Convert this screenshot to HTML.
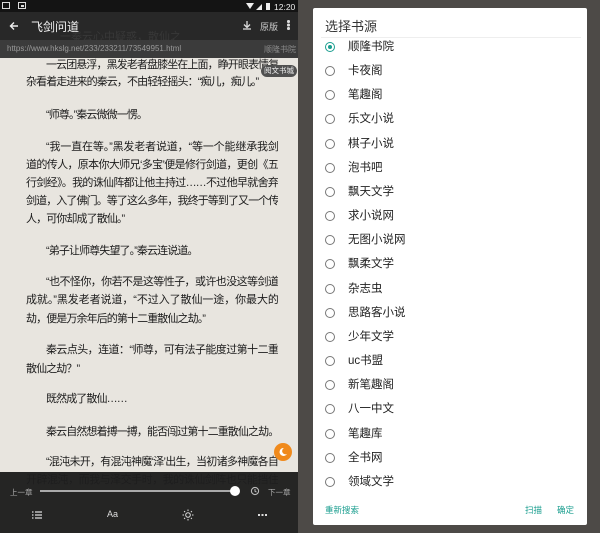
<!DOCTYPE html>
<html><head><meta charset="utf-8">
<style>
*{margin:0;padding:0;box-sizing:border-box}
body{width:600px;height:533px;overflow:hidden;position:relative;background:#4d4a47;font-family:"Liberation Sans","Noto Sans CJK SC",sans-serif}
#left{position:absolute;left:0;top:0;width:298px;height:533px;background:#e8e5df;overflow:hidden}
.ln{position:absolute;left:26px;width:252px;font-size:11px;letter-spacing:-0.9px;color:#1c1c1c;white-space:nowrap;line-height:14px;text-align:justify;text-align-last:justify;overflow:hidden}
.ln.e{text-align-last:left}
.ln.i{left:46px;width:232px}
.abs{position:absolute}
#dlg{position:absolute;left:313px;top:8px;width:274px;height:517px;background:#fff;border-radius:2px}
.r{position:absolute;left:12px;width:250px;height:20px;font-size:11.5px;color:#222;line-height:20px}
.r i{position:absolute;left:0;top:5px;width:10px;height:10px;border:1.3px solid #777;border-radius:50%}
.r span{position:absolute;left:23px}
</style></head><body>
<div id="left">
<div class="ln e i" style="top:58px">一云团悬浮，黑发老者盘膝坐在上面，睁开眼表情复</div>
<div class="ln e" style="top:75px">杂看着走进来的秦云，不由轻轻摇头：“痴儿，痴儿。”</div>
<div class="ln e i" style="top:108px">“师尊。”秦云微微一愣。</div>
<div class="ln i" style="top:140px">“我一直在等。”黑发老者说道，“等一个能继承我剑</div>
<div class="ln" style="top:158px">道的传人，原本你大师兄‘多宝’便是修行剑道，更创《五</div>
<div class="ln" style="top:176px">行剑经》。我的诛仙阵都让他主持过……不过他早就舍弃</div>
<div class="ln" style="top:194px">剑道，入了佛门。等了这么多年，我终于等到了又一个传</div>
<div class="ln e" style="top:212px">人，可你却成了散仙。”</div>
<div class="ln e i" style="top:244px">“弟子让师尊失望了。”秦云连说道。</div>
<div class="ln i" style="top:275px">“也不怪你，你若不是这等性子，或许也没这等剑道</div>
<div class="ln" style="top:293px">成就。”黑发老者说道，“不过入了散仙一途，你最大的</div>
<div class="ln e" style="top:312px">劫，便是万余年后的第十二重散仙之劫。”</div>
<div class="ln i" style="top:343px">秦云点头，连道：“师尊，可有法子能度过第十二重</div>
<div class="ln e" style="top:362px">散仙之劫？”</div>
<div class="ln e i" style="top:392px">既然成了散仙……</div>
<div class="ln e i" style="top:425px">秦云自然想着搏一搏，能否闯过第十二重散仙之劫。</div>
<div class="ln i" style="top:455px">“混沌未开，有混沌神魔‘泽’出生，当初诸多神魔各自</div>
<div class="ln" style="top:473px">开辟混沌，而我与泽交手时，我的诛仙剑阵也只能挡住</div>

<div class="abs" style="left:0;top:0;width:298px;height:12px;background:#141414"></div>
<div class="abs" style="left:2px;top:2px;width:8px;height:7px;border:1.3px solid #ddd"></div>
<div class="abs" style="left:18px;top:2px;width:8px;height:7px;border:1.3px solid #ddd;background:#141414"><div style="margin:1.5px;width:3px;height:2px;background:#ddd"></div></div>
<svg class="abs" style="left:246px;top:2px" width="52" height="9"><path d="M0 1 L8 1 L4 7Z" fill="#eee"/><path d="M10 8 L16 2 L16 8Z" fill="#eee"/><rect x="20" y="1" width="4" height="7" fill="#eee"/><text x="28" y="8" font-size="8.5" fill="#eee" font-family="Liberation Sans">12:20</text></svg>
<div class="abs" style="left:0;top:12px;width:298px;height:28px;background:rgba(32,32,32,.96)"></div>
<div class="abs" style="left:60px;top:28px;font-size:11px;color:#383838">一秦云心中疑惑，散仙之</div>
<svg class="abs" style="left:9px;top:21px" width="10" height="10"><path d="M9 5H2M5 1.5L1.5 5 5 8.5" stroke="#eee" stroke-width="1.4" fill="none"/></svg>
<div class="abs" style="left:31px;top:18px;font-size:12px;color:#f2f2f2">飞剑问道</div>
<svg class="abs" style="left:242px;top:20px" width="10" height="10"><path d="M5 1V7M2 4.5L5 7.5 8 4.5M1 9H9" stroke="#ddd" stroke-width="1.3" fill="none"/></svg>
<div class="abs" style="left:260px;top:20px;font-size:9px;color:#ccc">原版</div>
<div class="abs" style="left:287px;top:20px;width:2.5px;height:2.5px;background:#ddd;box-shadow:0 3.5px #ddd,0 7px #ddd;border-radius:50%"></div>
<div class="abs" style="left:0;top:40px;width:298px;height:18px;background:#3b3b3b"></div>
<div class="abs" style="left:7px;top:44px;font-size:8px;color:#9a9a9a">https://www.hkslg.net/233/233211/73549951.html</div>
<div class="abs" style="left:264px;top:44px;font-size:8px;color:#8a8a8a">顺隆书院</div>
<div class="abs" style="left:261px;top:65px;width:36px;height:12px;border-radius:6px;background:#505050;color:#eee;font-size:7.5px;line-height:12px;text-align:center">阅文书城</div>

<div class="abs" style="left:274px;top:443px;width:18px;height:18px;border-radius:50%;background:#f08a1c"></div>
<svg class="abs" style="left:278px;top:447px" width="10" height="10"><path d="M6 1A4 4 0 1 0 9 7 3.2 3.2 0 0 1 6 1Z" fill="#fff"/></svg>

<div class="abs" style="left:0;top:472px;width:298px;height:61px;background:rgba(30,30,30,.97)"></div>
<div class="abs" style="left:10px;top:487px;font-size:7.5px;color:#aaa">上一章</div>
<div class="abs" style="left:40px;top:490px;width:195px;height:2px;background:#aaa"></div>
<div class="abs" style="left:230px;top:486px;width:10px;height:10px;border-radius:50%;background:#fff"></div>
<svg class="abs" style="left:250px;top:486px" width="10" height="10"><circle cx="5" cy="5" r="3.6" stroke="#bbb" stroke-width="1.1" fill="none"/><path d="M5 3V5.3L6.5 6" stroke="#bbb" stroke-width="1" fill="none"/></svg>
<div class="abs" style="left:268px;top:487px;font-size:7.5px;color:#aaa">下一章</div>
<svg class="abs" style="left:32px;top:511px" width="10" height="8"><path d="M0 1H1.5M3 1H10M0 4H1.5M3 4H10M0 7H1.5M3 7H10" stroke="#ddd" stroke-width="1.2"/></svg>
<div class="abs" style="left:107px;top:509px;font-size:9px;color:#ddd">Aa</div>
<svg class="abs" style="left:182px;top:509px" width="12" height="12"><circle cx="6" cy="6" r="2.3" stroke="#ddd" fill="none"/><path d="M6 0.5V2M6 10V11.5M0.5 6H2M10 6H11.5M2.1 2.1L3.1 3.1M8.9 8.9L9.9 9.9M2.1 9.9L3.1 8.9M8.9 3.1L9.9 2.1" stroke="#ddd"/></svg>
<div class="abs" style="left:258px;top:514px;width:2px;height:2px;background:#ddd;box-shadow:3.5px 0 #ddd,7px 0 #ddd"></div>
</div>

<div id="dlg">
<div class="abs" style="left:12px;top:8px;font-size:13px;color:#333">选择书源</div>
<div class="abs" style="left:8px;top:29px;width:260px;height:1px;background:#eee"></div>
<div class="r" style="top:29px"><i style="border-color:#1a9e8f"><b style="position:absolute;left:1.7px;top:1.7px;width:4px;height:4px;border-radius:50%;background:#1a9e8f"></b></i><span>顺隆书院</span></div>
<div class="r" style="top:53px"><i></i><span>卡夜阁</span></div>
<div class="r" style="top:77px"><i></i><span>笔趣阁</span></div>
<div class="r" style="top:101px"><i></i><span>乐文小说</span></div>
<div class="r" style="top:126px"><i></i><span>棋子小说</span></div>
<div class="r" style="top:150px"><i></i><span>泡书吧</span></div>
<div class="r" style="top:174px"><i></i><span>飘天文学</span></div>
<div class="r" style="top:198px"><i></i><span>求小说网</span></div>
<div class="r" style="top:222px"><i></i><span>无图小说网</span></div>
<div class="r" style="top:246px"><i></i><span>飘柔文学</span></div>
<div class="r" style="top:271px"><i></i><span>杂志虫</span></div>
<div class="r" style="top:295px"><i></i><span>思路客小说</span></div>
<div class="r" style="top:319px"><i></i><span>少年文学</span></div>
<div class="r" style="top:343px"><i></i><span>uc书盟</span></div>
<div class="r" style="top:367px"><i></i><span>新笔趣阁</span></div>
<div class="r" style="top:391px"><i></i><span>八一中文</span></div>
<div class="r" style="top:416px"><i></i><span>笔趣库</span></div>
<div class="r" style="top:440px"><i></i><span>全书网</span></div>
<div class="r" style="top:464px"><i></i><span>领域文学</span></div>
<div class="abs" style="left:12px;top:496px;font-size:8.5px;color:#1a9e8f">重新搜索</div>
<div class="abs" style="left:212px;top:496px;font-size:8.5px;color:#1a9e8f">扫描</div>
<div class="abs" style="left:244px;top:496px;font-size:8.5px;color:#1a9e8f">确定</div>
</div>
</body></html>
